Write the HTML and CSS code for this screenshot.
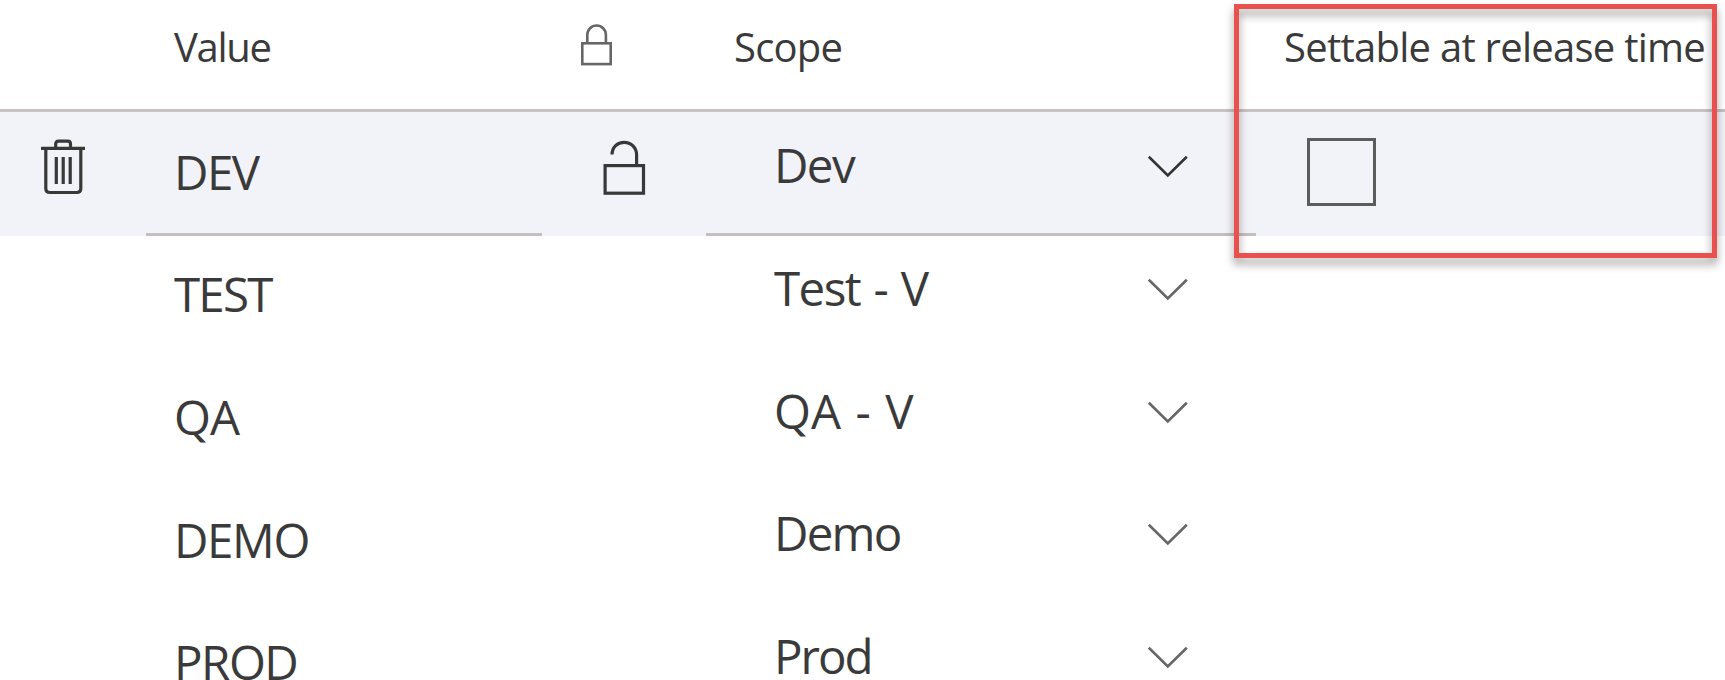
FILE: index.html
```html
<!DOCTYPE html>
<html lang="en">
<head>
<meta charset="utf-8">
<title>Variables</title>
<link rel="stylesheet" href="styles.css">
</head>
<body>
<svg class="defs" width="0" height="0" aria-hidden="true">
  <symbol id="chevron" viewBox="0 0 42 24"><path d="M1.8 1.8 20.8 20.5 39.8 1.8" fill="none" stroke="currentColor" stroke-width="2.6"/></symbol>
</svg>
<main class="table">
  <div class="row head">
    <div class="cell"></div>
    <div class="cell value"><span class="t-value">Value</span></div>
    <div class="cell lock"><svg width="34" height="44" viewBox="0 0 34 44" fill="none" stroke="#666" stroke-width="2.6"><rect x="2.3" y="20.3" width="28.4" height="20.8"/><path d="M7.3 20V11.8a9.3 9.3 0 0 1 18.6 0V20"/></svg></div>
    <div class="cell scope"><span class="t-scope">Scope</span></div>
    <div class="cell settable"><span class="t-settable">Settable at release time</span></div>
  </div>
  <div class="row active">
    <div class="cell trash"><svg width="46" height="56" viewBox="0 0 46 56" fill="none" stroke="#383838" stroke-width="3.2"><path d="M0 9.3H44M14.7 9V5Q14.7 2.2 17.5 2.2H26.7Q29.5 2.2 29.5 5V9M4.8 10V49.5Q4.8 53.5 9 53.5H35.5Q39.8 53.5 39.8 49.5V10M15.3 18V45M22.2 18V45M29.2 18V45"/></svg></div>
    <div class="cell value"><span class="t-dev">DEV</span></div>
    <div class="cell lock"><svg width="44" height="56" viewBox="0 0 44 56" fill="none" stroke="#383838" stroke-width="3.2"><rect x="2.1" y="25.6" width="38.4" height="27.6"/><path d="M9 14.5C9.2 7 14.5 2.3 21 2.3c7.2 0 12.6 5.2 12.6 12.6V25"/></svg></div>
    <div class="cell scope"><span class="s-dev">Dev</span><svg class="chevron"><use href="#chevron"/></svg></div>
    <div class="cell settable"><span class="checkbox"></span></div>
  </div>
  <div class="row">
    <div class="cell"></div><div class="cell value"><span class="t-test">TEST</span></div><div class="cell"></div>
    <div class="cell scope"><span class="s-test">Test - V</span><svg class="chevron"><use href="#chevron"/></svg></div>
  </div>
  <div class="row">
    <div class="cell"></div><div class="cell value"><span class="t-qa">QA</span></div><div class="cell"></div>
    <div class="cell scope"><span class="s-qa">QA - V</span><svg class="chevron"><use href="#chevron"/></svg></div>
  </div>
  <div class="row">
    <div class="cell"></div><div class="cell value"><span class="t-demo">DEMO</span></div><div class="cell"></div>
    <div class="cell scope"><span class="s-demo">Demo</span><svg class="chevron"><use href="#chevron"/></svg></div>
  </div>
  <div class="row">
    <div class="cell"></div><div class="cell value"><span class="t-prod">PROD</span></div><div class="cell"></div>
    <div class="cell scope"><span class="s-prod">Prod</span><svg class="chevron"><use href="#chevron"/></svg></div>
  </div>
  <div class="callout"></div>
</main>
</body>
</html>
```

FILE: styles.css
```css
* { box-sizing: border-box; }
body { margin: 0; background: #fff; }
.defs { display: block; }
.table {
  position: relative;
  width: 1725px;
  height: 680px;
  overflow: hidden;
  font-family: "Open Sans", "Noto Sans", sans-serif;
  font-size: 47.5px;
  line-height: 60px;
  color: #3a3a3a;
}
.row {
  display: grid;
  grid-template-columns: 146px 396px 164px 550px 469px;
  height: 122.7px;
}
.cell { display: flex; align-items: flex-start; white-space: nowrap; }
.value { padding: 29.5px 0 0 28px; }
.scope { padding: 23.2px 67px 0 68px; justify-content: space-between; }
.chevron { width: 42px; height: 24px; margin-top: 20.2px; color: #666; }

.head {
  height: 112px;
  border-bottom: 3px solid #c8c2c2;
  font-size: 40px;
}
.head .value { padding: 17px 0 0 28px; }
.head .lock { padding: 23px 0 0 38px; }
.head .scope { padding: 17px 0 0 28px; }
.head .settable { padding: 17px 0 0 28px; }

.active { height: 123.7px; margin-bottom: -1px; background: #f2f3f9; }
.active .value, .active .scope { border-bottom: 3px solid #c4bebf; }
.active .trash { padding: 27px 0 0 41px; }
.active .lock { padding: 27.5px 0 0 61px; }
.active .chevron { color: #333; }
.active .settable { padding: 26px 0 0 51px; }
.checkbox { width: 69px; height: 68px; border: 3px solid #5c5c5c; }

/* Per-label tracking */
.t-value { letter-spacing: -1.3px; }
.t-scope { letter-spacing: -.8px; }
.t-settable { letter-spacing: -.74px; }
.t-dev { letter-spacing: -1.5px; }
.t-test { letter-spacing: -1.8px; }
.t-qa { letter-spacing: -1px; }
.t-demo { letter-spacing: -1.4px; }
.t-prod { letter-spacing: -1.5px; }
.s-dev { letter-spacing: -1.6px; }
.s-test { letter-spacing: -1.6px; word-spacing: 2.8px; }
.s-qa { word-spacing: 2.2px; }
.s-demo { letter-spacing: -1.8px; }
.s-prod { letter-spacing: -2px; }

.callout {
  position: absolute;
  left: 1234px;
  top: 3.5px;
  width: 482.5px;
  height: 254.5px;
  border: 5px solid #e9514f;
  filter: drop-shadow(0 6px 4px rgba(60, 45, 45, .5));
}
```
